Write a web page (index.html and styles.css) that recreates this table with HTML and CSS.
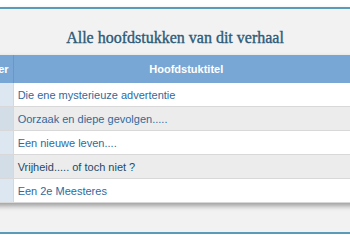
FILE: index.html
```html
<!DOCTYPE html>
<html>
<head>
  <title>Hoofdstukken</title>
  <link rel="stylesheet" href="styles.css">
</head>
<body>
  <div class="panel">
    <h2>Alle hoofdstukken van dit verhaal</h2>

    <table class="chapters">
      <thead>
        <tr>
          <th class="nr">Nummer</th>
          <th>Hoofdstuktitel</th>
        </tr>
      </thead>
      <tbody>
        <tr>
          <td class="nr">1</td>
          <td><a href="#">Die ene mysterieuze advertentie</a></td>
        </tr>
        <tr>
          <td class="nr">2</td>
          <td><a href="#">Oorzaak en diepe gevolgen.....</a></td>
        </tr>
        <tr>
          <td class="nr">3</td>
          <td><a href="#">Een nieuwe leven....</a></td>
        </tr>
        <tr>
          <td class="nr">4</td>
          <td><a href="#" class="visited">Vrijheid..... of toch niet ?</a></td>
        </tr>
        <tr>
          <td class="nr">5</td>
          <td><a href="#">Een 2e Meesteres</a></td>
        </tr>
      </tbody>
    </table>
  </div>
</body>
</html>
```

FILE: styles.css
```css
body {
  margin: 0;
  background: #fff;
  font-family: "Liberation Sans", Arial, sans-serif;
  overflow: hidden;
}
.panel {
  margin-top: 7px;
  padding: 1px 0 29px;
  background: #f2f2f2;
  border-top: 2px solid #5a9cb8;
  border-bottom: 2px solid #5a9cb8;
  box-shadow: 0 4px 6px rgba(0, 0, 0, 0.35);
}
h2 {
  margin: 19px 0 8px;
  text-align: center;
  font-family: "Liberation Serif", Georgia, serif;
  font-size: 16px;
  font-weight: normal;
  color: #2c5a78;
  -webkit-text-stroke: 0.35px #2c5a78;
}
.chapters {
  margin-left: -40px;
  width: 400px;
  border-collapse: collapse;
  background: #fff;
  box-shadow: 0 3px 5px rgba(0, 0, 0, 0.35);
}
.chapters th {
  height: 28px;
  padding: 0 4px;
  background: #79a7d5;
  color: #fff;
  font-size: 11px;
  font-weight: bold;
  text-align: center;
  border-right: 1px solid #6a98c6;
}
.chapters td {
  height: 23px;
  padding: 0 4px;
  font-size: 11px;
  border-bottom: 1px solid #d8d8d8;
  border-right: 1px solid #d8d8d8;
}
.chapters td.nr,
.chapters th.nr {
  width: 42px;
}
.chapters td.nr {
  background: #dde7f1;
  text-align: center;
}
.chapters tbody tr:nth-child(even) td {
  background: #ececec;
}
.chapters tbody tr:nth-child(even) td.nr {
  background: #d3dde8;
}
.chapters a {
  color: #2f6a9c;
  text-decoration: none;
}
.chapters a.visited {
  color: #1e4a68;
}
```
